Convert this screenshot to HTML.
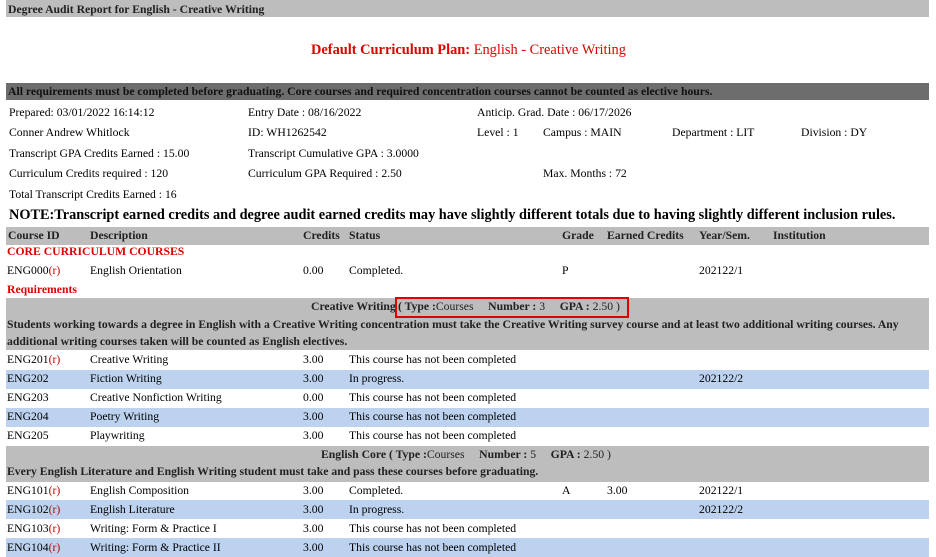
<!DOCTYPE html>
<html><head><style>
body{margin:0;width:936px;height:548px;overflow:hidden;background:#fff;font-family:"Liberation Serif",serif;font-size:11.7px;color:#000;position:relative}
.a{position:absolute;white-space:nowrap;line-height:14px}
.bar{position:absolute;left:6px;width:923px}
.b{font-weight:bold}
.r{color:#e00000}
.red{color:#c00000}
</style></head><body>
<div class="bar" style="top:0;height:17px;background:#bdbdbd"></div>
<div class="a b" style="left:8px;top:3px;color:#222">Degree Audit Report for English - Creative Writing</div>
<div class="a r" style="left:311px;top:42px;font-size:14.4px;line-height:16px"><b>Default Curriculum Plan:</b> English - Creative Writing</div>
<div class="bar" style="top:83px;height:17px;background:#6d6d6d"></div>
<div class="a b" style="left:8px;top:85px;color:#111">All requirements must be completed before graduating. Core courses and required concentration courses cannot be counted as elective hours.</div>

<div class="a" style="left:9px;top:106px">Prepared: 03/01/2022 16:14:12</div>
<div class="a" style="left:248px;top:106px">Entry Date : 08/16/2022</div>
<div class="a" style="left:477px;top:106px">Anticip. Grad. Date : 06/17/2026</div>
<div class="a" style="left:9px;top:126px">Conner Andrew Whitlock</div>
<div class="a" style="left:248px;top:126px">ID: WH1262542</div>
<div class="a" style="left:477px;top:126px">Level : 1</div>
<div class="a" style="left:543px;top:126px">Campus : MAIN</div>
<div class="a" style="left:672px;top:126px">Department : LIT</div>
<div class="a" style="left:801px;top:126px">Division : DY</div>
<div class="a" style="left:9px;top:147px">Transcript GPA Credits Earned : 15.00</div>
<div class="a" style="left:248px;top:147px">Transcript Cumulative GPA : 3.0000</div>
<div class="a" style="left:9px;top:167px">Curriculum Credits required : 120</div>
<div class="a" style="left:248px;top:167px">Curriculum GPA Required : 2.50</div>
<div class="a" style="left:543px;top:167px">Max. Months : 72</div>
<div class="a" style="left:9px;top:188px">Total Transcript Credits Earned : 16</div>
<div class="a b" style="left:9px;top:207px;font-size:14.3px;line-height:17px">NOTE:Transcript earned credits and degree audit earned credits may have slightly different totals due to having slightly different inclusion rules.</div>

<div class="bar" style="top:227px;height:18px;background:#bdbdbd"></div>
<div class="a b" style="left:8px;top:229px;color:#222">Course ID</div>
<div class="a b" style="left:90px;top:229px;color:#222">Description</div>
<div class="a b" style="left:303px;top:229px;color:#222">Credits</div>
<div class="a b" style="left:349px;top:229px;color:#222">Status</div>
<div class="a b" style="left:562px;top:229px;color:#222">Grade</div>
<div class="a b" style="left:607px;top:229px;color:#222">Earned Credits</div>
<div class="a b" style="left:699px;top:229px;color:#222">Year/Sem.</div>
<div class="a b" style="left:773px;top:229px;color:#222">Institution</div>
<div class="a b r" style="left:7px;top:245px">CORE CURRICULUM COURSES</div>
<div class="a" style="left:7px;top:264px">ENG000<span class="red">(r)</span></div>
<div class="a" style="left:90px;top:264px">English Orientation</div>
<div class="a" style="left:303px;top:264px">0.00</div>
<div class="a" style="left:349px;top:264px">Completed.</div>
<div class="a" style="left:562px;top:264px">P</div>
<div class="a" style="left:699px;top:264px">202122/1</div>
<div class="a b r" style="left:7px;top:283px">Requirements</div>

<div class="bar" style="top:298px;height:52px;background:#bdbdbd"></div>
<div class="a" style="left:311px;top:300px;color:#222"><b>Creative Writing</b></div>
<div class="a" style="left:395px;top:297px;width:230px;height:17px;border:2px solid #e00000"></div>
<div class="a" style="left:398px;top:300px;color:#222"><b>( Type :</b>Courses&nbsp;&nbsp;&nbsp;&nbsp; <b>Number :</b> 3&nbsp;&nbsp;&nbsp;&nbsp; <b>GPA :</b> 2.50 )</div>
<div class="a b" style="left:7px;top:318px;color:#222">Students working towards a degree in English with a Creative Writing concentration must take the Creative Writing survey course and at least two additional writing courses. Any</div>
<div class="a b" style="left:7px;top:335px;color:#222">additional writing courses taken will be counted as English electives.</div>

<div class="bar" style="top:370px;height:19px;background:#bcd2ee"></div>
<div class="bar" style="top:408px;height:19px;background:#bcd2ee"></div>
<div class="a" style="left:7px;top:353px">ENG201<span class="red">(r)</span></div><div class="a" style="left:90px;top:353px">Creative Writing</div><div class="a" style="left:303px;top:353px">3.00</div><div class="a" style="left:349px;top:353px">This course has not been completed</div>
<div class="a" style="left:7px;top:372px">ENG202</div><div class="a" style="left:90px;top:372px">Fiction Writing</div><div class="a" style="left:303px;top:372px">3.00</div><div class="a" style="left:349px;top:372px">In progress.</div><div class="a" style="left:699px;top:372px">202122/2</div>
<div class="a" style="left:7px;top:391px">ENG203</div><div class="a" style="left:90px;top:391px">Creative Nonfiction Writing</div><div class="a" style="left:303px;top:391px">0.00</div><div class="a" style="left:349px;top:391px">This course has not been completed</div>
<div class="a" style="left:7px;top:410px">ENG204</div><div class="a" style="left:90px;top:410px">Poetry Writing</div><div class="a" style="left:303px;top:410px">3.00</div><div class="a" style="left:349px;top:410px">This course has not been completed</div>
<div class="a" style="left:7px;top:429px">ENG205</div><div class="a" style="left:90px;top:429px">Playwriting</div><div class="a" style="left:303px;top:429px">3.00</div><div class="a" style="left:349px;top:429px">This course has not been completed</div>

<div class="bar" style="top:446px;height:36px;background:#bdbdbd"></div>
<div class="a" style="left:321px;top:448px;color:#222"><b>English Core</b> <b>( Type :</b>Courses&nbsp;&nbsp;&nbsp;&nbsp; <b>Number :</b> 5&nbsp;&nbsp;&nbsp;&nbsp; <b>GPA :</b> 2.50 )</div>
<div class="a b" style="left:7px;top:465px;color:#222">Every English Literature and English Writing student must take and pass these courses before graduating.</div>

<div class="bar" style="top:500px;height:19px;background:#bcd2ee"></div>
<div class="bar" style="top:538px;height:19px;background:#bcd2ee"></div>
<div class="a" style="left:7px;top:484px">ENG101<span class="red">(r)</span></div><div class="a" style="left:90px;top:484px">English Composition</div><div class="a" style="left:303px;top:484px">3.00</div><div class="a" style="left:349px;top:484px">Completed.</div><div class="a" style="left:562px;top:484px">A</div><div class="a" style="left:607px;top:484px">3.00</div><div class="a" style="left:699px;top:484px">202122/1</div>
<div class="a" style="left:7px;top:503px">ENG102<span class="red">(r)</span></div><div class="a" style="left:90px;top:503px">English Literature</div><div class="a" style="left:303px;top:503px">3.00</div><div class="a" style="left:349px;top:503px">In progress.</div><div class="a" style="left:699px;top:503px">202122/2</div>
<div class="a" style="left:7px;top:522px">ENG103<span class="red">(r)</span></div><div class="a" style="left:90px;top:522px">Writing: Form &amp; Practice I</div><div class="a" style="left:303px;top:522px">3.00</div><div class="a" style="left:349px;top:522px">This course has not been completed</div>
<div class="a" style="left:7px;top:541px">ENG104<span class="red">(r)</span></div><div class="a" style="left:90px;top:541px">Writing: Form &amp; Practice II</div><div class="a" style="left:303px;top:541px">3.00</div><div class="a" style="left:349px;top:541px">This course has not been completed</div>
</body></html>
